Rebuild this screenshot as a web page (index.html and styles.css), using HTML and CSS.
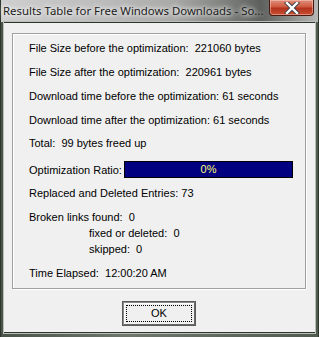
FILE: index.html
```html
<!DOCTYPE html>
<html>
<head>
  <title>Results Table</title>
  <link rel="stylesheet" href="styles.css">
</head>
<body>
  <div class="window">
    <div class="titlebar">
      <span class="title">Results Table for Free Windows Downloads - So...</span>
      <div class="close-btn">
        <svg width="16" height="12" viewBox="0 0 16 12">
          <path d="M3 1 L13 11 M13 1 L3 11" stroke="#3a3f4a" stroke-width="4.2" stroke-linecap="square"/>
          <path d="M3 1 L13 11 M13 1 L3 11" stroke="#ffffff" stroke-width="2.4" stroke-linecap="square"/>
        </svg>
      </div>
    </div>

    <div class="client">
      <div class="group">
        <div class="row">File Size before the optimization:&nbsp; 221060 bytes</div>
        <div class="row gap">File Size after the optimization:&nbsp; 220961 bytes</div>
        <div class="row gap">Download time before the optimization: 61 seconds</div>
        <div class="row gap">Download time after the optimization: 61 seconds</div>
        <div class="row gap-sm">Total:&nbsp; 99 bytes freed up</div>
        <div class="row ratio gap-lg">
          <span class="ratio-label">Optimization Ratio:</span>
          <div class="progress"><span>0%</span></div>
        </div>
        <div class="row gap-sm">Replaced and Deleted Entries: 73</div>
        <div class="row gap">Broken links found:&nbsp; 0</div>
        <div class="row indent">fixed or deleted:&nbsp; 0</div>
        <div class="row indent">skipped:&nbsp; 0</div>
        <div class="row gap">Time Elapsed:&nbsp; 12:00:20 AM</div>
      </div>

      <div class="buttons">
        <button class="ok-btn"><span class="focus">OK</span></button>
      </div>
    </div>
  </div>
</body>
</html>
```

FILE: styles.css
```css
body {
  margin: 0;
  width: 319px;
  height: 337px;
  overflow: hidden;
  font-family: "Liberation Sans", Arial, sans-serif;
}
.window {
  width: 319px;
  height: 337px;
  box-sizing: border-box;
  background: linear-gradient(90deg, #4a5448 0%, #6f776c 40%, #525b50 100%);
  padding: 0 3px 4px 3px;
  display: flex;
  flex-direction: column;
  border-left: 1px solid #2e352d;
  border-right: 1px solid #2e352d;
}
.titlebar {
  height: 22px;
  margin: 0 -3px;
  background: linear-gradient(90deg, #cfcfcf 0%, #bdbdbd 30%, #a9aaa8 55%, #7b7d7a 72%, #5d605c 82%, #8e908d 92%, #b7b8b6 100%);
  display: flex;
  align-items: flex-start;
  justify-content: space-between;
}
.title {
  font-family: "Noto Sans", "Open Sans", sans-serif;
  font-size: 11.4px;
  color: #1c1c1c;
  padding: 3px 0 0 2px;
  text-shadow: 0 0 4px #fff, 0 0 6px #fff;
  white-space: nowrap;
}
.close-btn {
  width: 45px;
  height: 16px;
  margin-right: 4px;
  box-sizing: border-box;
  border: 1px solid #4a1a12;
  border-top: none;
  border-radius: 0 0 4px 4px;
  background: linear-gradient(180deg, #e08f7c 0%, #cf5a40 45%, #b3321d 55%, #c9502f 100%);
  box-shadow: inset 0 0 0 1px rgba(255, 220, 210, 0.45);
  display: flex;
  align-items: center;
  justify-content: center;
}
.client {
  flex: 1;
  background: #f0f0f0;
  border-top: 1px solid #2e352d;
  border-bottom: 1px solid #2e352d;
  box-shadow: 0 0 0 1px #b9bfb8;
  padding: 10px 9px 0 8px;
}
.group {
  height: 256px;
  box-sizing: border-box;
  border: 1px solid #a0a0a0;
  box-shadow: inset 1px 1px 0 #fff, 1px 1px 0 #fff;
  padding: 6px 0 0 16px;
  font-size: 11px;
  color: #000;
}
.row {
  height: 16px;
  line-height: 16px;
  white-space: nowrap;
}
.gap { margin-top: 8px; }
.gap-sm { margin-top: 7px; }
.gap-lg { margin-top: 10px; height: 17px; }
.indent { padding-left: 60px; }
.ratio {
  display: flex;
  align-items: center;
}
.ratio-label {
  width: 95px;
}
.progress {
  width: 169px;
  height: 17px;
  box-sizing: border-box;
  background: #000080;
  border: 1px solid #000;
  color: #ffff70;
  text-align: center;
  line-height: 15px;
}
.buttons {
  display: flex;
  justify-content: center;
  margin-top: 12px;
}
.ok-btn {
  width: 74px;
  height: 25px;
  padding: 3px;
  box-sizing: border-box;
  background: #f0f0f0;
  border: 1px solid #5a5a5a;
  box-shadow: inset 1px 1px 0 #8a8a8a, inset -1px -1px 0 #6a6a6a, inset 2px 2px 0 #fff;
  font-family: "Liberation Sans", Arial, sans-serif;
  font-size: 11px;
  color: #000;
}
.focus {
  display: block;
  height: 100%;
  box-sizing: border-box;
  border: 1px dotted #000;
  line-height: 15px;
}
```
